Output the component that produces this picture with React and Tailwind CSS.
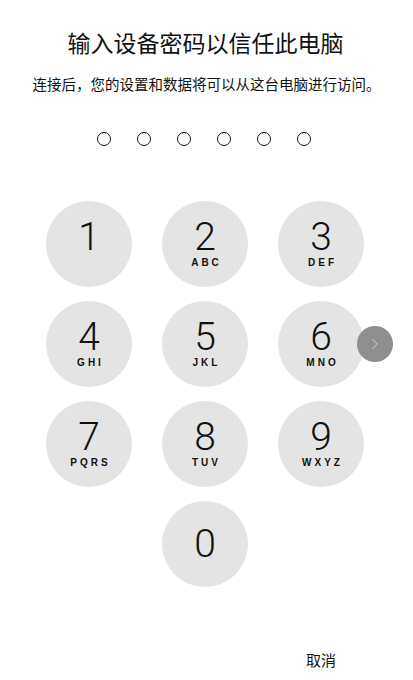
import React from 'react';
import { ChevronRight } from 'lucide-react';

const keys = [
  { d: '1', l: '' },
  { d: '2', l: 'ABC' },
  { d: '3', l: 'DEF' },
  { d: '4', l: 'GHI' },
  { d: '5', l: 'JKL' },
  { d: '6', l: 'MNO' },
  { d: '7', l: 'PQRS' },
  { d: '8', l: 'TUV' },
  { d: '9', l: 'WXYZ' },
];

const cjk = { fontFamily: '"Noto Sans CJK SC", "Noto Sans", sans-serif' };
const num = { fontFamily: 'Roboto, Inter, sans-serif' };

const Key = ({ d, l }) => (
  <button className="w-[86px] h-[86px] rounded-full bg-[#e4e4e4] flex flex-col items-center text-[#111]">
    <span className="mt-[18px] text-[39px] leading-[36px] font-light" style={num}>
      {d}
    </span>
    <span className="mt-[1px] h-[14px] text-[10px] leading-[14px] font-bold tracking-[3px] pl-[3px]" style={{ fontFamily: '"Liberation Sans", Arial, sans-serif' }}>
      {l}
    </span>
  </button>
);

const App = () => {
  return (
    <div className="relative w-[413px] h-[680px] bg-white overflow-hidden" style={cjk}>
      <div className="pt-[27px] flex flex-col items-center">
        <h1 className="text-[23px] leading-[30px] text-[#111] -ml-[2px]">输入设备密码以信任此电脑</h1>
        <p className="mt-[17px] text-[14.5px] leading-[20px] text-[#111]">
          连接后，您的设置和数据将可以从这台电脑进行访问。
        </p>

        {/* passcode dots */}
        <div className="mt-[38px] mr-[6px] flex gap-[26px]">
          {[0, 1, 2, 3, 4, 5].map((i) => (
            <div key={i} className="w-[14px] h-[14px] rounded-full border-[1.3px] border-[#111]" />
          ))}
        </div>
      </div>

      {/* keypad */}
      <div className="mt-[55px] pl-[46px] grid grid-cols-[86px_86px_86px] gap-x-[30px] gap-y-[14px]">
        {keys.map((k) => (
          <Key key={k.d} {...k} />
        ))}
        <div />
        <button className="w-[86px] h-[86px] rounded-full bg-[#e4e4e4] flex items-center justify-center text-[#111]">
          <span className="text-[39px] leading-[42px] font-light" style={num}>0</span>
        </button>
        <div />
        <div />
        <div />
        <div className="mt-[49px] text-center text-[15px] leading-[20px] text-[#111]">取消</div>
      </div>

      {/* next arrow overlay */}
      <div className="absolute left-[357px] top-[326px] w-[36px] h-[36px] rounded-full bg-[#8f8f8f] flex items-center justify-center">
        <ChevronRight size={18} strokeWidth={1.3} color="#d8d8d8" />
      </div>
    </div>
  );
};

export default App;
